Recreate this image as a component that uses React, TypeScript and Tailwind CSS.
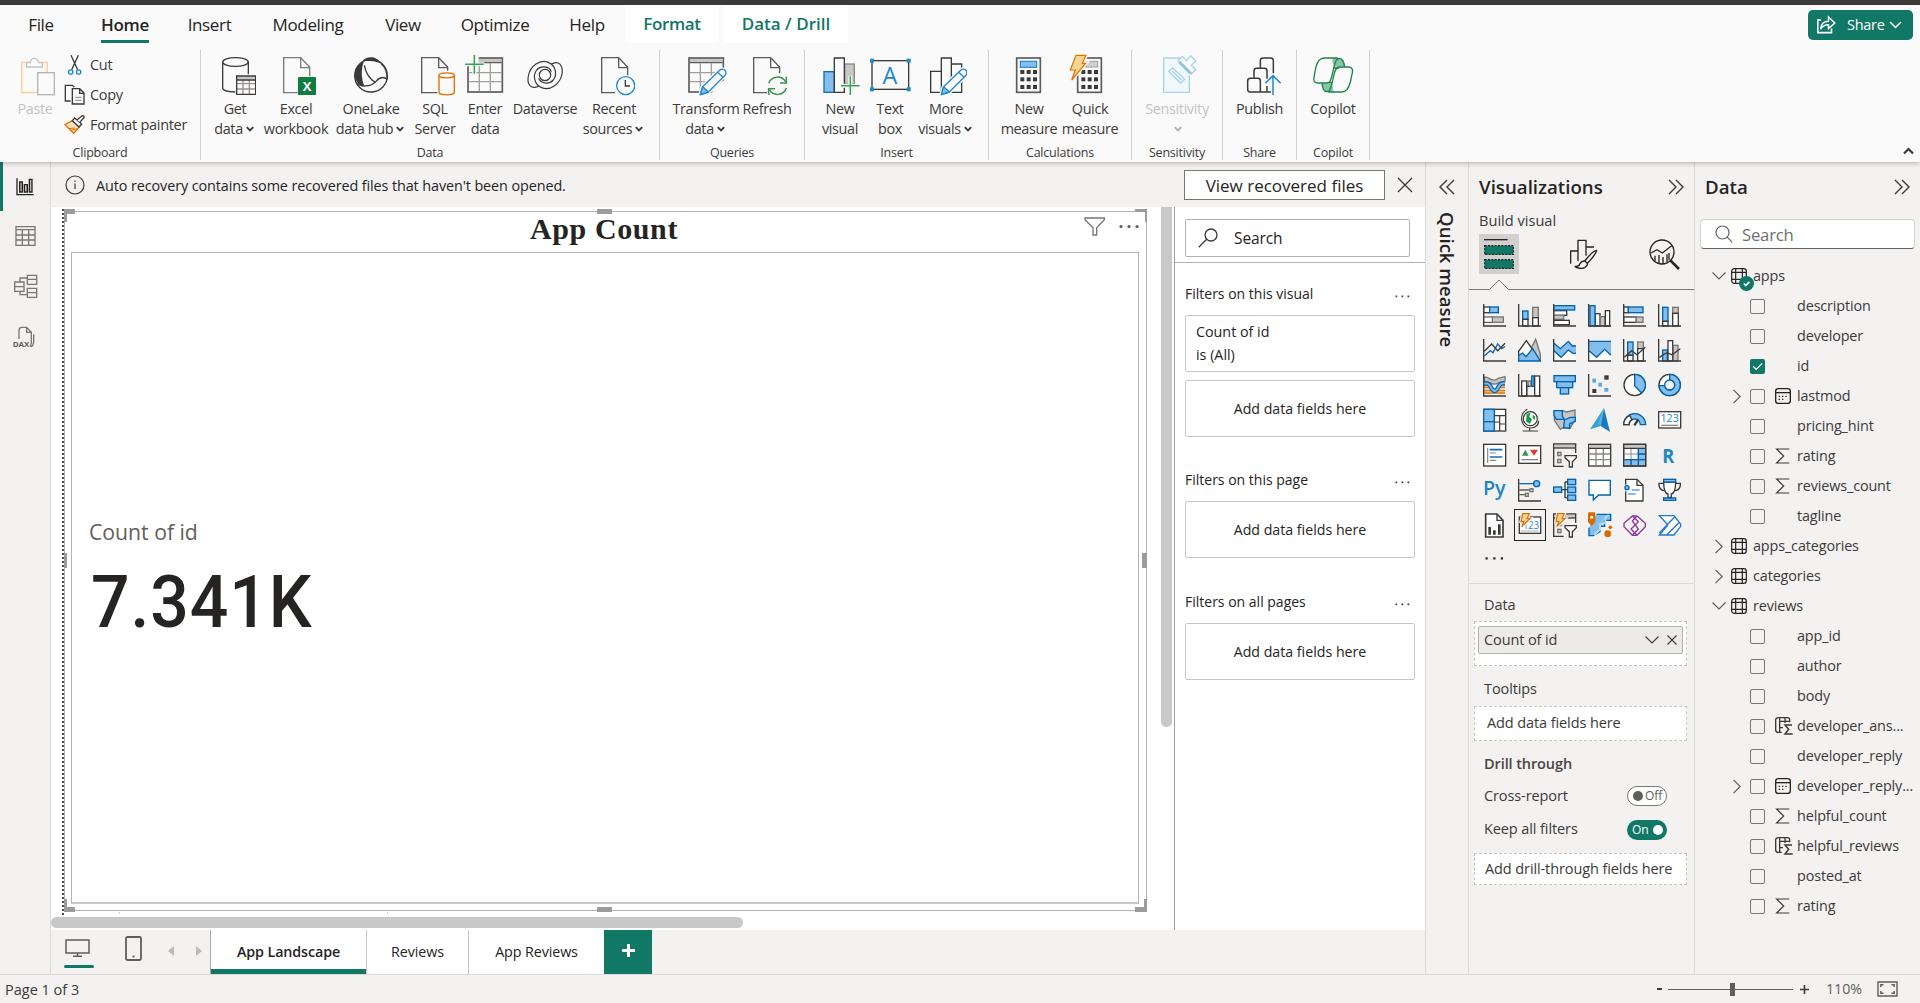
import React from "react";

const DARK = "#3b3a39";
const BLUE = "#1f88d2";
const NAVY = "#0f6cbd";
const SKY = "#83beec";
const GRAY = "#c8c6c4";

/* ---------- shared ribbon shapes (3 units = 1px) ---------- */

const Doc = ({ x, cut = 278, w = 44 }: { x: number; cut?: number; w?: number }) => (
  <g fill="#fafafa" stroke="#5d5b59" strokeWidth="4">
    <path d={`M${x + w} 278 H${x + 1} V173 H${x + 52} L${x + 79} 201 V${cut}`} />
    <path d={`M${x + 52} 173 V203 H${x + 79}`} fill="none" />
  </g>
);

const Plus = ({ x, y }: { x: number; y: number }) => (
  <g>
    <path d={`M${x - 30} ${y} H${x + 30} M${x} ${y - 30} V${y + 30}`} stroke="#fafafa" strokeWidth="12" />
    <path d={`M${x - 28} ${y} H${x + 28} M${x} ${y - 28} V${y + 28}`} stroke="#34a352" strokeWidth="4.5" />
  </g>
);

const Pencil = ({ x }: { x: number }) => (
  <g transform={`translate(${x} 0)`} strokeLinejoin="round">
    <path d="M0 284 L7 260 L58 211 A10 10 0 0 1 74 226 L24 276 Z" fill="#fafafa" stroke="#fafafa" strokeWidth="12" />
    <path d="M0 284 L7 260 L58 211 A10 10 0 0 1 74 226 L24 276 Z" fill="#fafafa" stroke={BLUE} strokeWidth="4" />
    <path d="M0 284 L7 260 L24 276 Z" fill={SKY} stroke={BLUE} strokeWidth="4" />
    <path d="M52 217 L68 232" stroke={BLUE} strokeWidth="4" />
  </g>
);

const RIcon = ({ x, children }: { x: number; children: React.ReactNode }) => (
  <svg className="h-[42px] w-[42px] shrink-0" viewBox={`${x} 162 126 126`} fill="none">
    {children}
  </svg>
);

const Keys = ({ x }: { x: number }) => (
  <g fill={DARK}>
    {[210, 232, 255].map((y) => [0, 19, 38].map((d) => <rect key={`${y}-${d}`} x={x + d} y={y} width="12" height="12" />))}
  </g>
);

const Caret = ({ color = DARK }: { color?: string }) => (
  <svg className="mr-[2px] ml-[3px] inline-block h-[6px] w-[8px]" viewBox="0 0 8 6" fill="none" stroke={color} strokeWidth="1.9">
    <path d="M0.8 1.2 L4 4.4 L7.2 1.2" />
  </svg>
);

const ribbonIcons = {
  paste: (
    <RIcon x={42}>
      <rect x="65" y="187" width="77" height="91" fill="#fdf3e0" stroke="#f3d3a6" strokeWidth="4" />
      <rect x="72" y="196" width="63" height="76" fill="#fafafa" />
      <path d="M80 201 V188 H91 A12 13 0 0 1 115 188 H127 V201 Z" fill="#fafafa" stroke="#c4c4c4" strokeWidth="4" />
      <rect x="113" y="218" width="50" height="66" fill="#fafafa" stroke="#b5b5b5" strokeWidth="4" />
    </RIcon>
  ),
  getData: (
    <RIcon x={642}>
      <path d="M668 186 V264 C668 271 684 276 706 276 M745 186 V223" stroke={DARK} strokeWidth="4" />
      <ellipse cx="706.5" cy="186" rx="38.5" ry="13" stroke={DARK} strokeWidth="4" />
      <rect x="710" y="228" width="57" height="55" fill="#fafafa" />
      <rect x="711" y="229" width="55" height="9" fill={GRAY} />
      <path d="M710 251 H767 M710 267 H767 M729 240 V283 M748 240 V283" stroke="#979593" strokeWidth="4" />
      <path d="M710 228 H767 V283 H710 Z M710 240 H767" stroke={DARK} strokeWidth="4" />
    </RIcon>
  ),
  excel: (
    <RIcon x={825}>
      <g opacity="0.8"><Doc x={850} cut={229} w={43} /></g>
      <rect x="894" y="231" width="54" height="54" rx="2" fill="#107c41" />
      <text x="921" y="273" textAnchor="middle" fontSize="39" fontWeight="700" fill="#fff" fontFamily="Open Sans">X</text>
    </RIcon>
  ),
  oneLake: (
    <RIcon x={1050}>
      <circle cx="1113" cy="227" r="49" stroke={DARK} strokeWidth="4" />
      <path d="M1087 184 C1098 168 1130 166 1142 190 C1124 182 1104 182 1087 184 Z" fill={DARK} />
      <path d="M1064 230 C1062 205 1076 190 1092 184 C1083 205 1083 235 1093 258 C1078 258 1068 246 1064 230 Z" fill={DARK} />
      <path d="M1068 247 C1080 262 1112 262 1128 244 C1140 230 1152 230 1162 238" stroke={DARK} strokeWidth="4" />
      <path d="M1093 196 C1098 222 1110 238 1126 247 M1142 190 C1158 203 1162 220 1162 238" stroke={DARK} strokeWidth="4" />
    </RIcon>
  ),
  sql: (
    <RIcon x={1242}>
      <Doc x={1264} cut={212} w={48} />
      <path d="M1317 226 V277 C1317 287 1363 287 1363 277 V226" fill="#fafafa" stroke="#e07000" strokeWidth="4" />
      <ellipse cx="1340" cy="226" rx="23" ry="7.5" fill="#fafafa" stroke="#e07000" strokeWidth="4" />
    </RIcon>
  ),
  enter: (
    <RIcon x={72}>
      <rect x="84" y="174" width="103" height="102" fill="#fafafa" stroke="#5d5b59" strokeWidth="5" />
      <rect x="87" y="177" width="97" height="9" fill={GRAY} />
      <path d="M86 188 H185" stroke="#5d5b59" strokeWidth="4" />
      <path d="M86 218 H185 M86 245 H185 M118 190 V274 M151 190 V274" stroke="#a19f9d" strokeWidth="4" />
      <path d="M72 162 H116 V198 H82 L72 198 Z" fill="#fafafa" />
      <Plus x={103} y={193} />
    </RIcon>
  ),
  dataverse: (
    <RIcon x={252}>
      <g stroke={DARK} strokeWidth="3.6">
        <circle cx="315" cy="225" r="17" />
        <path d="M297 257 C274 271 260 254 265 228 C271 197 300 177 325 187 C348 196 352 224 340 240 C328 254 303 252 296 235" />
        <path d="M333 193 C356 179 370 196 366 222 C360 253 330 273 305 263 C282 254 278 226 290 210 C302 196 327 198 334 215" />
      </g>
    </RIcon>
  ),
  recent: (
    <RIcon x={459}>
      <Doc x={484} cut={226} w={41} />
      <circle cx="557" cy="257" r="27" fill="#fafafa" stroke={BLUE} strokeWidth="4" />
      <path d="M556 240 V258 H570" stroke={DARK} strokeWidth="4" />
    </RIcon>
  ),
  transform: (
    <RIcon x={735}>
      <rect x="747" y="174" width="103" height="102" fill="#fafafa" stroke="#5d5b59" strokeWidth="5" />
      <rect x="750" y="177" width="97" height="9" fill={GRAY} />
      <path d="M749 188 H848" stroke="#5d5b59" strokeWidth="4" />
      <path d="M749 218 H848 M749 245 H848 M781 190 V274 M814 190 V274" stroke="#a19f9d" strokeWidth="4" />
      <path d="M861 232 L808 284 H861 Z" fill="#fafafa" />
      <Pencil x={781} />
    </RIcon>
  ),
  refresh: (
    <RIcon x={918}>
      <Doc x={940} cut={220} w={41} />
      <path d="M986 250 A28 28 0 0 1 1037 246 M1039 264 A28 28 0 0 1 988 269" stroke="#3a9350" strokeWidth="4.5" />
      <path d="M1039 230 V249 H1020 M986 285 V266 H1005" stroke="#3a9350" strokeWidth="4.5" />
    </RIcon>
  ),
  newVisual: (
    <RIcon x={1137}>
      <rect x="1152" y="215" width="31" height="62" fill={SKY} stroke={NAVY} strokeWidth="4" />
      <rect x="1214" y="192" width="29" height="60" fill={GRAY} stroke="#8a8886" strokeWidth="4" />
      <path d="M1183 174 H1213 V277 H1183 Z" fill="#fafafa" stroke={DARK} strokeWidth="4" />
      <Plus x={1231} y={257} />
    </RIcon>
  ),
  textBox: (
    <RIcon x={1287}>
      <rect x="1296" y="182" width="110" height="86" stroke={DARK} strokeWidth="4" />
      {[1290, 1400].map((x) => [176, 262].map((y) => <rect key={`${x}${y}`} x={x} y={y} width="12" height="12" fill={BLUE} />))}
      <text x="1350" y="251" textAnchor="middle" fontSize="70" fill={BLUE} fontFamily="Open Sans">A</text>
    </RIcon>
  ),
  more: (
    <RIcon x={75}>
      <path d="M92 214 H124 V277 H92 Z M124 174 H154 V277 H124 Z M154 192 H185 V277 H154 Z" stroke={DARK} strokeWidth="4" />
      <Pencil x={124} />
    </RIcon>
  ),
  calc: (
    <RIcon x={324}>
      <rect x="350" y="174" width="71" height="103" stroke="#5d5b59" strokeWidth="5" />
      <rect x="361" y="184" width="49" height="18" fill={SKY} stroke={BLUE} strokeWidth="3.5" />
      <Keys x={361} />
    </RIcon>
  ),
  quick: (
    <RIcon x={507}>
      <rect x="533" y="174" width="71" height="103" stroke="#5d5b59" strokeWidth="5" />
      <rect x="544" y="184" width="49" height="17" fill="#d2d0ce" stroke="#a19f9d" strokeWidth="3" />
      <Keys x={544} />
      <path d="M528 166 H558 L547 190 H557 L515 240 L526 210 H511 Z" fill="#fafafa" stroke="#fafafa" strokeWidth="12" />
      <path d="M528 166 H558 L547 190 H557 L515 240 L526 210 H511 Z" fill="#fbd58f" stroke="#e07000" strokeWidth="3.5" />
    </RIcon>
  ),
  sens: (
    <RIcon x={768}>
      <path d="M840 174 H791 V277 H868 V226" stroke="#a9d3ea" strokeWidth="4" fill="#f1f8fc" />
      <path d="M806 214 L818 204 L854 238 L842 250 Z M816 213 L845 240" stroke="#a9d3ea" strokeWidth="4" />
      <path d="M834 182 L847 169 L860 182 L872 167 L888 183 L874 196 L887 209 L874 222 Z" fill="#fafafa" stroke="#a9d3ea" strokeWidth="4" />
      <path d="M838 186 L872 220" stroke="#8fc4e2" strokeWidth="9" />
    </RIcon>
  ),
  publish: (
    <RIcon x={1014}>
      <g stroke={DARK} strokeWidth="4.5">
        <path d="M1078 204 V182 Q1078 174 1086 174 H1109 Q1117 174 1117 182 V220" />
        <path d="M1059 233 V213 Q1059 205 1067 205 H1090 Q1098 205 1098 213 V236" />
        <path d="M1110 276 H1047 Q1040 276 1040 268 V243 Q1040 235 1048 235 H1070 Q1078 235 1078 243 V276 M1098 258 V276" />
      </g>
      <path d="M1116 285 V228 M1093 250 L1116 227 L1139 250" stroke={BLUE} strokeWidth="4.5" />
    </RIcon>
  ),
  copilot: (
    <RIcon x={1236}>
      <path d="M1300 175 C1325 168 1330 185 1334 200 H1306 C1300 200 1300 190 1296 182 Z" fill="#86c5a3" />
      <path d="M1266 250 H1294 C1300 250 1296 268 1302 275 C1275 282 1270 268 1266 250 Z" fill="#86c5a3" />
      <g stroke="#1d8348" strokeWidth="4">
        <path d="M1313 174 H1272 C1258 174 1252 184 1247 204 L1242 232 C1239 246 1246 249 1256 249 H1280 C1290 249 1292 242 1296 226 L1303 197 C1306 182 1310 176 1318 175 C1328 175 1331 184 1334 200" />
        <path d="M1285 276 H1326 C1340 276 1346 266 1351 246 L1357 218 C1360 204 1352 201 1343 201 H1318 C1309 201 1306 208 1302 224 L1295 253 C1292 268 1288 275 1281 275 C1270 275 1268 264 1266 250" />
        <path d="M1300 204 H1318 M1282 248 H1298" />
      </g>
    </RIcon>
  ),
};

const RButton = ({ icon, l1, l2, caret, w, dim }: { icon: keyof typeof ribbonIcons; l1: string; l2?: string; caret?: boolean; w: string; dim?: boolean }) => (
  <button className={`${w} flex h-[90px] shrink-0 flex-col items-center pt-1`}>
    {ribbonIcons[icon]}
    <span className={`mt-[3px] whitespace-nowrap text-[14.4px] leading-[20px] tracking-[-0.33px] ${dim ? "text-[#c4c4c4]" : "text-[#3b3a39]"}`}>{l1}</span>
    <span className={`flex items-center whitespace-nowrap text-[14.4px] leading-[20px] tracking-[-0.33px] ${dim ? "h-[20px]" : ""} text-[#3b3a39]`}>
      {l2}
      {caret && <Caret color={dim ? "#b0b0b0" : DARK} />}
    </span>
  </button>
);

const Group = ({ label, w, pad, children }: { label: string; w: string; pad: string; children: React.ReactNode }) => (
  <section className={`${w} flex h-[110px] shrink-0 flex-col border-r border-[#d1d1d1]`}>
    <div className={`flex h-[92px] ${pad}`}>{children}</div>
    <div className="pt-[3px] text-center text-[12.5px] leading-[20px] tracking-[-0.2px] text-[#3b3a39]">{label}</div>
  </section>
);

const tabs = [
  ["File", "ml-[28px] w-[26px]"],
  ["Home", "ml-[47px] w-[48px]"],
  ["Insert", "ml-[39px] w-[43px]"],
  ["Modeling", "ml-[40px] w-[74px]"],
  ["View", "ml-[39px] w-[38px]"],
  ["Optimize", "ml-[38px] w-[70px]"],
  ["Help", "ml-[39px] w-[36px]"],
];

const Ribbon = () => (
  <header className="relative z-10 h-[162px] w-full bg-[#fafafa] shadow-[0_1px_5px_rgba(0,0,0,0.28)]">
    <div className="h-[5px] bg-[#3b3a39]" />
    <div className="flex h-[45px] items-start text-[17px] text-[#252423]">
      {tabs.map(([t, c]) => (
        <div key={t} className={`${c} flex h-[38px] flex-col items-center justify-between whitespace-nowrap tracking-[-0.35px] ${t === "Home" ? "font-semibold" : ""}`}>
          <span className="pt-[1px] leading-[37px]">{t}</span>
          {t === "Home" && <span className="-mt-[3px] h-[3px] w-full shrink-0 bg-[#117865]" />}
        </div>
      ))}
      <div className="ml-[20px] flex h-[38px] w-[94px] items-center justify-center bg-white font-semibold tracking-[-0.35px] text-[#117865]">Format</div>
      <div className="ml-[5px] flex h-[38px] w-[124px] items-center justify-center whitespace-nowrap bg-white font-semibold text-[#117865]">Data / Drill</div>
      <button className="mt-[5px] ml-auto mr-[7px] flex h-[30px] w-[105px] items-center rounded-[5px] bg-[#117865] text-white">
        <svg className="ml-[8px] h-5 w-5" viewBox="0 0 20 20" fill="none" stroke="white" strokeWidth="1.6">
          <path d="M5 5 H1.8 V17.6 H15.5 V13.5" />
          <path d="M4.5 14 C5 9 8 6.3 12.5 6.2 V2 L18.8 8 L12.5 13.6 V9.8 C9 9.8 6.5 11 4.5 14 Z" strokeWidth="1.4" />
        </svg>
        <span className="ml-[11px] text-[14.5px] font-medium tracking-[-0.3px]">Share</span>
        <svg className="ml-[5px] h-[8px] w-[13px]" viewBox="0 0 13 8" fill="none" stroke="white" strokeWidth="1.5"><path d="M1 1 L6.5 6.5 L12 1" /></svg>
      </button>
    </div>
    <div className="flex items-start">
      <Group label="Clipboard" w="w-[201px]" pad="pl-0">
        <div className="flex w-[63px] pl-[0px]">
          <div className="ml-[4px]"><RButton icon="paste" l1="Paste" w="w-[62px]" dim /></div>
        </div>
        <div className="flex flex-col text-[14.5px] tracking-[-0.3px] text-[#3b3a39]">
          <div className="flex h-[30px] items-center">
            <svg className="mr-[3px] h-6 w-6" viewBox="190 160 72 72" fill="none">
              <path d="M214 167 L234 210 M236 167 L216 210" stroke={DARK} strokeWidth="4" />
              <circle cx="213" cy="217" r="6.5" stroke={BLUE} strokeWidth="4" /><circle cx="237" cy="217" r="6.5" stroke={BLUE} strokeWidth="4" />
            </svg>
            Cut
          </div>
          <div className="flex h-[30px] items-center">
            <svg className="mr-[3px] h-6 w-6" viewBox="190 250 72 72" fill="none" stroke={DARK} strokeWidth="4">
              <path d="M213 304 H197 V257 H218 L224 263" />
              <path d="M218 267 H240 L253 280 V313 H218 Z M240 267 V281 H253" /><path d="M227 293 H246 M227 302 H246" stroke="#8a8886" strokeWidth="3" />
            </svg>
            Copy
          </div>
          <div className="flex h-[30px] items-center whitespace-nowrap">
            <svg className="mr-[3px] h-6 w-6" viewBox="190 339 72 72" fill="none">
              <path d="M196 374 L218 362 L240 380 L222 400 Z" fill="#fbe3bd" stroke="#e07000" strokeWidth="4" />
              <path d="M206 386 L226 384 M212 392 L234 386" stroke="#e07000" strokeWidth="3" />
              <path d="M218 362 L225 354 L246 372 L238 381 Z" fill="#fafafa" stroke={DARK} strokeWidth="4" />
              <path d="M232 360 L246 348 Q254 345 253 353 L240 367" fill="#fafafa" stroke={DARK} strokeWidth="4" />
            </svg>
            Format painter
          </div>
        </div>
      </Group>
      <Group label="Data" w="w-[459px]" pad="pl-[8px]">
        <RButton icon="getData" l1="Get" l2="data" caret w="w-[52px]" />
        <RButton icon="excel" l1="Excel" l2="workbook" w="w-[70px]" />
        <RButton icon="oneLake" l1="OneLake" l2="data hub" caret w="w-[80px]" />
        <RButton icon="sql" l1="SQL" l2="Server" w="w-[48px]" />
        <RButton icon="enter" l1="Enter" l2="data" w="w-[52px]" />
        <RButton icon="dataverse" l1="Dataverse" w="w-[68px]" />
        <RButton icon="recent" l1="Recent" l2="sources" caret w="w-[70px]" />
      </Group>
      <Group label="Queries" w="w-[145px]" pad="pl-[11px]">
        <RButton icon="transform" l1="Transform" l2="data" caret w="w-[70px]" />
        <RButton icon="refresh" l1="Refresh" w="w-[52px]" />
      </Group>
      <Group label="Insert" w="w-[184px]" pad="pl-[13px]">
        <RButton icon="newVisual" l1="New" l2="visual" w="w-[44px]" />
        <RButton icon="textBox" l1="Text" l2="box" w="w-[56px]" />
        <RButton icon="more" l1="More" l2="visuals" caret w="w-[56px]" />
      </Group>
      <Group label="Calculations" w="w-[143px]" pad="pl-[9px]">
        <RButton icon="calc" l1="New" l2="measure" w="w-[62px]" />
        <RButton icon="quick" l1="Quick" l2="measure" w="w-[60px]" />
      </Group>
      <Group label="Sensitivity" w="w-[91px]" pad="">
        <RButton icon="sens" l1="Sensitivity" caret dim w="w-[90px]" />
      </Group>
      <Group label="Share" w="w-[74px]" pad=""><RButton icon="publish" l1="Publish" w="w-[73px]" /></Group>
      <Group label="Copilot" w="w-[73px]" pad=""><RButton icon="copilot" l1="Copilot" w="w-[72px]" /></Group>
      <svg className="mt-[97px] mr-[6px] ml-auto h-[8px] w-[11px]" viewBox="0 0 11 8" fill="none" stroke={DARK} strokeWidth="2.2"><path d="M1 6.5 L5.5 2 L10 6.5" /></svg>
    </div>
  </header>
);

/* ---------- left rail ---------- */

const Rail = () => (
  <nav className="flex w-[51px] shrink-0 flex-col border-r border-[#dcdad8]">
    <div className="flex h-[49px] items-center border-l-[3px] border-[#117865] pl-[13px]">
      <svg className="h-[18px] w-[18px]" viewBox="0 0 54 54" fill="none" stroke="#252423" strokeWidth="4"><path d="M3 1 V50 H53" /><path d="M11 12 H19 V42 H11 Z M25 20 H34 V42 H25 Z M40 4 H48 V42 H40 Z" fill="#bdbbb9" /></svg>
    </div>
    <div className="flex h-[50px] items-center pl-[15px]">
      <svg className="h-5 w-[21px]" viewBox="0 0 63 60" fill="none" stroke="#797775" strokeWidth="4"><path d="M3 2 H60 V58 H3 Z M3 11 H60 M3 27 H60 M3 42 H60 M22 11 V58 M41 11 V58" /></svg>
    </div>
    <div className="flex h-[50px] items-center pl-[14px]">
      <svg className="h-6 w-6" viewBox="0 0 72 72" fill="none" stroke="#797775" strokeWidth="4"><path d="M2 24 H30 V52 H2 Z M2 38 H30 M40 4 H68 V31 H40 Z M40 16 H68 M40 43 H68 V70 H40 Z M40 56 H68 M18 24 V12 H40 M18 52 V62 H40" /></svg>
    </div>
    <div className="flex h-[52px] items-center pl-[12px]">
      <svg className="h-6 w-6" viewBox="0 0 72 72" fill="none" stroke="#797775" strokeWidth="4"><path d="M21 42 V16 Q21 7 30 7 H44 L58 22 V54 Q57 62 54 64 M44 7 V22 H58 M65 28 V52 Q64 62 56 66" /><text x="2" y="66" fontSize="23" fontWeight="700" stroke="none" fill="#605e5c" fontFamily="Open Sans" textLength="50" lengthAdjust="spacingAndGlyphs">DAX</text></svg>
    </div>
  </nav>
);

/* ---------- canvas ---------- */

const Handle = ({ c }: { c: string }) => <span className={`absolute bg-[#9c9c9c] ${c}`} />;

const ReportCanvas = () => (
  <div className="relative flex h-[723px] w-[1123px] bg-white">
    <div className="ml-[11px] mt-[2px] h-[706px] border-l-2 border-dotted border-[#4a4a4a]" />
    <div className="relative mt-[4px] flex h-[700px] w-[1083px] flex-col border border-[#b3b3b3]">
      <Handle c="-left-px -top-[3px] h-[5px] w-[11px]" /><Handle c="-left-px -top-[3px] h-[13px] w-[3px]" />
      <Handle c="-right-px -top-[3px] h-[3px] w-[12px]" /><Handle c="-right-px -top-[3px] h-[13px] w-[2px]" />
      <Handle c="-left-px -bottom-[2px] h-[5px] w-[11px]" /><Handle c="-left-px -bottom-[2px] h-[13px] w-[3px]" />
      <Handle c="-right-px -bottom-[2px] h-[5px] w-[12px]" /><Handle c="-right-px -bottom-[2px] h-[13px] w-[3px]" />
      <Handle c="left-[532px] -top-[3px] h-[5px] w-[15px]" /><Handle c="left-[532px] -bottom-[2px] h-[5px] w-[15px]" />
      <Handle c="-left-px top-[341px] h-[15px] w-[3px]" /><Handle c="-right-px top-[341px] h-[15px] w-[5px]" />
      <div className="flex h-[40px] items-start">
        <h1 className="flex-1 pl-[59px] text-center font-['Liberation_Serif'] text-[30px] leading-[34px] font-bold tracking-[0.6px] text-[#252423]">App Count</h1>
        <svg className="mt-[5px] h-[20px] w-[22px]" viewBox="0 0 66 60" fill="none" stroke="#797775" strokeWidth="4"><path d="M3 3 H61 V8 L38 32 V54 H27 V32 L3 8 Z" /></svg>
        <svg className="mr-[7px] ml-[13px] mt-[12px] h-[5px] w-[20px]" viewBox="0 0 20 5" fill="#605e5c"><circle cx="2" cy="2.5" r="1.6" /><circle cx="10" cy="2.5" r="1.6" /><circle cx="18" cy="2.5" r="1.6" /></svg>
      </div>
      <div className="ml-[6px] h-[652px] w-[1068px] border border-b-2 border-[#b3b3b3] border-b-[#c8c8c8] pt-[264px] pl-[17px]">
        <div className="text-[21.2px] leading-[30px] text-[#605e5c]">Count of id</div>
        <div className="mt-[15px] ml-[2px] origin-left scale-x-[0.93] font-['Roboto'] text-[73px] leading-[80px] font-medium tracking-[1px] text-[#252423]">7.341K</div>
      </div>
      <span className="absolute left-[54px] -bottom-[4px] h-[2px] w-px bg-[#d1d1d1]" /><span className="absolute left-[322px] -bottom-[4px] h-[2px] w-px bg-[#d1d1d1]" />
    </div>
    <div className="ml-[14px] h-[520px] w-[11px] rounded-b-[5px] bg-[#c8c8c8]" />
    <div className="absolute left-0 top-[710px] h-[11px] w-[692px] rounded-full bg-[#c8c8c8]" />
  </div>
);

const Dots = () => (
  <svg className="h-[3px] w-[15px]" viewBox="0 0 15 3" fill="#3b3a39"><rect x="0.5" y="0.5" width="1.7" height="1.7" /><rect x="6.5" y="0.5" width="1.7" height="1.7" /><rect x="12.5" y="0.5" width="1.7" height="1.7" /></svg>
);

const DropCard = () => (
  <div className="flex h-[57px] w-[230px] items-center justify-center rounded-[2px] border border-[#c8c6c4] text-[14.2px]">Add data fields here</div>
);

const FilterTitle = ({ t }: { t: string }) => (
  <div className="flex h-[22px] w-[225px] items-center justify-between text-[14px]">
    {t}
    <span className="pt-[6px]"><Dots /></span>
  </div>
);

const Filters = () => (
  <aside className="flex h-[723px] w-[251px] flex-col border-l border-[#a19f9d] bg-white text-[#252423]">
    <div className="flex h-[56px] items-start border-b border-[#b3b0ad] pt-[12px] pl-[10px]">
      <div className="flex h-[38px] w-[225px] items-center rounded-[2px] border border-[#b3b0ad] pl-[12px]">
        <svg className="h-5 w-5" viewBox="0 0 20 20" fill="none" stroke="#3b3a39" strokeWidth="1.3"><circle cx="13" cy="7" r="6" /><path d="M8.7 11.3 L0.8 19.2" /></svg>
        <span className="ml-[16px] pt-[2px] text-[15.5px] tracking-[-0.1px]">Search</span>
      </div>
    </div>
    <div className="flex flex-col pl-[10px]">
      <div className="mt-[19px]"><FilterTitle t="Filters on this visual" /></div>
      <div className="mt-[11px] flex h-[57px] w-[230px] flex-col justify-center rounded-[2px] border border-[#c8c6c4] pb-[2px] pl-[10px] text-[14.3px] leading-[23px]">
        <span>Count of id</span>
        <span>is (All)</span>
      </div>
      <div className="mt-[8px]"><DropCard /></div>
      <div className="mt-[31px] mb-[11px]"><FilterTitle t="Filters on this page" /></div>
      <DropCard />
      <div className="mt-[32px] mb-[11px]"><FilterTitle t="Filters on all pages" /></div>
      <DropCard />
    </div>
  </aside>
);

const Banner = () => (
  <div className="flex h-[45px] items-center text-[#252423]">
    <svg className="ml-[14px] h-5 w-5" viewBox="0 0 20 20" fill="none" stroke="#3b3a39" strokeWidth="1.2"><circle cx="10" cy="10" r="9" /><path d="M10 8.5 V14 M10 5.5 V7" /></svg>
    <span className="ml-[11px] pt-[2px] text-[14.4px] tracking-[-0.1px]">Auto recovery contains some recovered files that haven't been opened.</span>
    <button className="mt-[1px] ml-auto flex h-[30px] w-[201px] items-center justify-center border border-[#797775] bg-white pt-[2px] text-[17px] font-medium">View recovered files</button>
    <svg className="mr-[12px] ml-[12px] h-4 w-4" viewBox="0 0 16 16" fill="none" stroke="#3b3a39" strokeWidth="1.3"><path d="M1 1 L15 15 M15 1 L1 15" /></svg>
  </div>
);

const PageTabs = () => (
  <div className="flex h-[44px] text-[14.3px] tracking-[-0.1px] text-[#252423]">
    <div className="flex w-[160px] items-start border-r border-[#a6a6a6]">
      <div className="ml-[13px] flex w-[30px] flex-col items-center pt-[9px]">
        <svg className="-ml-[3px] h-[18px] w-[25px]" viewBox="0 0 25 18" fill="none" stroke="#605e5c" strokeWidth="1.5"><path d="M1 1 H24 V14 H1 Z M12.5 14 V17 M8 17.2 H17" /></svg>
        <span className="mt-[8px] h-[3px] w-[30px] rounded-full bg-[#117865]" />
      </div>
      <svg className="mt-[6px] ml-[31px] h-[25px] w-[17px]" viewBox="0 0 17 25" fill="none" stroke="#605e5c" strokeWidth="1.8"><rect x="1" y="1" width="15" height="23" rx="1.5" /><path d="M7.5 20.5 H9.5" /></svg>
      <svg className="mt-[16px] ml-[26px] h-[10px] w-[6px]" viewBox="0 0 6 10" fill="#bdbbb9"><path d="M6 0 V10 L0 5 Z" /></svg>
      <svg className="mt-[16px] ml-[22px] h-[10px] w-[6px]" viewBox="0 0 6 10" fill="#bdbbb9"><path d="M0 0 V10 L6 5 Z" /></svg>
    </div>
    <div className="flex w-[155px] items-center justify-center border-b-[5px] border-[#117865] bg-white pt-[5px] font-semibold">App Landscape</div>
    <div className="flex w-[103px] items-center justify-center border-x border-[#c8c6c4] bg-white">Reviews</div>
    <div className="flex w-[135px] items-center justify-center bg-white">App Reviews</div>
    <div className="flex w-[48px] items-center justify-center bg-[#117865]">
      <svg className="-mt-[3px] h-[15px] w-[15px]" viewBox="0 0 15 15" stroke="#fff" strokeWidth="3"><path d="M7.5 1 V14 M1 7.5 H14" /></svg>
    </div>
  </div>
);

/* ---------- visualizations ---------- */

const K = { stroke: DARK, strokeWidth: 4, fill: "none" } as const;
const B = { stroke: "#0063b1", strokeWidth: 4, fill: SKY } as const;
const G = { stroke: "#797775", strokeWidth: 4, fill: GRAY } as const;
const W = { stroke: DARK, strokeWidth: 4, fill: "#fff" } as const;
const Axis = () => <path d="M2 3 V69 H69" {...K} />;
const Bolt = () => (
  <g>
    <path d="M14 0 H36 L28 17 H38 L9 44 L17 26 H8 Z" fill="#f3f2f1" stroke="#f3f2f1" strokeWidth="8" />
    <path d="M14 2 H34 L27 17 H36 L11 41 L18 26 H9 Z" fill="#fbd58f" stroke="#e07000" strokeWidth="3.5" />
  </g>
);
const Funnel = () => <path d="M36 38 H70 V44 L58 56 V72 H49 V56 L36 44 Z" fill="#fff" stroke={DARK} strokeWidth="4" />;
const Slicer = () => (
  <g>
    <path d="M32 70 H2 V3 H68 V30" {...K} />
    <rect x="4" y="5" width="62" height="8" fill={GRAY} />
    <path d="M2 15 H68" {...K} />
    <rect x="14" y="28" width="10" height="10" {...G} /><rect x="14" y="49" width="10" height="10" {...G} />
    <Funnel />
  </g>
);

const vizIcons: React.ReactNode[] = [
  <g><rect x="2" y="12" width="18" height="17" {...W} /><rect x="20" y="12" width="26" height="17" {...B} /><rect x="2" y="42" width="28" height="16" {...W} strokeWidth="3" /><rect x="28" y="42" width="33" height="16" {...G} /><Axis /></g>,
  <g><rect x="14" y="24" width="16" height="25" {...B} /><rect x="14" y="49" width="16" height="20" {...W} /><rect x="44" y="13" width="17" height="31" {...G} /><rect x="44" y="44" width="17" height="25" {...W} /><Axis /></g>,
  <g><rect x="2" y="23" width="39" height="14" {...W} /><rect x="2" y="37" width="30" height="12" {...G} /><rect x="2" y="52" width="47" height="13" {...W} /><rect x="2" y="8" width="63" height="13" {...B} /><Axis /></g>,
  <g><rect x="22" y="32" width="14" height="37" {...W} /><rect x="37" y="41" width="14" height="28" {...G} /><rect x="52" y="23" width="13" height="46" {...W} /><rect x="6" y="8" width="15" height="61" {...B} /><Axis /></g>,
  <g><rect x="2" y="12" width="14" height="17" {...W} /><rect x="16" y="12" width="44" height="17" {...B} /><rect x="2" y="42" width="38" height="16" {...W} /><rect x="40" y="42" width="20" height="16" {...G} /><Axis /></g>,
  <g><rect x="14" y="13" width="16" height="42" {...B} /><rect x="14" y="55" width="16" height="14" {...W} /><rect x="44" y="13" width="17" height="18" {...G} /><rect x="44" y="31" width="17" height="38" {...W} /><Axis /></g>,
  <g><path d="M4 54 L22 38 L30 44 L44 18 L56 32 L66 26" stroke={NAVY} strokeWidth="4" fill="none" /><path d="M4 40 L26 18 L44 38 L66 16" {...K} /><Axis /></g>,
  <g><path d="M40 30 L53 4 L67 48 V69" {...G} /><path d="M2 60 V40 L25 8 L45 36" {...W} /><path d="M2 52 V69 H67 L44 32 L24 56 L14 45 Z" {...B} /></g>,
  <g><path d="M4 68 V40 L24 58 L44 38 L68 56 V68 Z" fill="#fff" /><path d="M3 16 L22 32 L46 10 L56 22 H69 V46 H60 L46 36 L24 58 L3 40 Z" fill={SKY} /><path d="M3 16 L22 32 L46 10 L58 24 H69 M3 38 L24 58 L46 36 L60 46 H69" stroke="#0063b1" strokeWidth="4" fill="none" /><Axis /></g>,
  <g><path d="M4 68 V40 L24 58 L44 38 L68 56 V68 Z" fill="#fff" /><path d="M3 10 H69 V52 L50 34 L26 58 L3 38 Z" fill={SKY} /><path d="M3 10 H69 M3 38 L26 58 L50 34 L69 52" stroke="#0063b1" strokeWidth="4" fill="none" /><Axis /></g>,
  <g><rect x="14" y="12" width="16" height="40" {...B} /><rect x="14" y="52" width="16" height="17" {...W} /><rect x="44" y="12" width="17" height="20" {...G} /><rect x="44" y="32" width="17" height="37" {...W} /><path d="M4 58 L26 38 L42 50 L67 28" {...K} /><Axis /></g>,
  <g><rect x="14" y="36" width="14" height="33" {...B} /><rect x="30" y="8" width="14" height="61" {...W} /><rect x="46" y="22" width="14" height="47" {...G} /><path d="M4 58 L26 44 L42 50 L67 32" {...K} /><Axis /></g>,
  <g><path d="M4 40 H18 M52 40 H66 M4 56 H66" stroke="#d96a00" strokeWidth="12" /><path d="M4 40 H16 M54 40 H66 M4 56 H66" stroke="#fbb45c" strokeWidth="5" /><path d="M4 12 L14 14 Q34 28 46 16 L66 11 V24 L50 28 Q34 38 20 29 L4 24 Z" {...G} /><path d="M3 32 H14 C24 34 24 54 35 54 C46 54 46 32 58 31 H66" stroke="#0063b1" strokeWidth="13" fill="none" /><path d="M3 32 H14 C24 34 24 54 35 54 C46 54 46 32 58 31 H66" stroke={SKY} strokeWidth="5.5" fill="none" /><Axis /></g>,
  <g><rect x="11" y="24" width="15" height="45" {...W} /><rect x="30" y="24" width="9" height="16" {...G} /><rect x="41" y="9" width="7" height="31" {...B} /><rect x="50" y="9" width="15" height="60" {...W} /><path d="M26 68 V40 H34" {...K} /><Axis /></g>,
  <g><rect x="3" y="8" width="64" height="18" {...B} /><rect x="11" y="26" width="48" height="18" {...B} /><rect x="22" y="44" width="25" height="19" {...B} /></g>,
  <g><rect x="49" y="7" width="13" height="13" fill={DARK} /><rect x="13" y="17" width="11" height="12" fill="#5ba7e0" /><rect x="31" y="29" width="11" height="12" fill="#5ba7e0" /><rect x="49" y="45" width="12" height="11" fill="#5ba7e0" /><rect x="13" y="48" width="12" height="12" fill={DARK} /><Axis /></g>,
  <g><circle cx="35" cy="36" r="32" {...W} /><path d="M35 4 A32 32 0 0 1 56 60 L35 38 Z" {...B} /></g>,
  <g><circle cx="35" cy="36" r="32" {...W} /><path d="M35 4 A32 32 0 1 1 3 38 H20 A15 15 0 1 0 35 21 Z" {...B} /><circle cx="35" cy="36" r="15" fill="#f3f2f1" stroke="#0063b1" strokeWidth="4" /></g>,
  <g><rect x="2" y="4" width="66" height="65" {...W} /><rect x="2" y="4" width="32" height="37" {...B} /><rect x="2" y="41" width="32" height="28" {...B} /><path d="M34 23 H68 M50 23 V69 M34 42 H50 M50 48 H68" {...K} strokeWidth="3.5" /></g>,
  <g><circle cx="37" cy="32" r="21" {...W} strokeWidth="3.5" /><path d="M26 18 L38 14 L34 26 L42 34 L36 48 L24 40 Z M44 20 L52 26 L50 36 L44 30 Z" fill="#1f9a48" /><path d="M28 4 C0 18 8 62 40 60 C56 58 62 48 62 38 M35 60 V69 M14 69 H60" {...K} strokeWidth="3.5" /></g>,
  <g><path d="M4 8 H30 L40 12 L66 6 V36 L50 62 L34 56 L22 64 L4 36 Z" {...G} /><path d="M3 8 H28 V24 L34 34 H10 L3 22 Z M34 36 L52 28 H67 V40 L50 48 V60 H32 Z" {...B} /></g>,
  <g><path d="M48 0 L6 64 L38 54 Z" fill="#3aa0d8" /><path d="M48 0 L66 72 L38 54 Z" fill="#1b78c2" /><path d="M48 0 L38 54 L30 46 Z" fill="#65bde6" opacity="0.6" /></g>,
  <g><path d="M2 50 A33 33 0 0 1 68 50 H52 A17 17 0 0 0 18 50 Z" {...B} /><path d="M2 50 A33 33 0 0 1 20 22 L27 35 A17 17 0 0 0 18 50 Z" {...W} /><path d="M34 52 L46 34" {...K} strokeWidth="7" /></g>,
  <g><rect x="2" y="11" width="66" height="49" {...W} /><text x="35" y="43" textAnchor="middle" fontSize="32" fill={BLUE} fontFamily="Open Sans">123</text><path d="M10 52 H60" stroke="#8a8886" strokeWidth="4" /></g>,
  <g><rect x="2" y="4" width="66" height="65" {...W} /><path d="M14 14 V60 M20 30 H38 M20 52 H40" stroke="#8a8886" strokeWidth="3.5" /><path d="M20 20 H58 M20 42 H58" stroke={NAVY} strokeWidth="5" /></g>,
  <g><rect x="2" y="8" width="66" height="53" {...W} /><path d="M12 38 L22 20 L32 38 Z" fill="#3a9350" /><path d="M36 20 H60 L48 38 Z" fill="#e03a2f" /><path d="M10 50 H60" stroke="#8a8886" strokeWidth="4" /></g>,
  <Slicer />,
  <g><rect x="2" y="4" width="66" height="65" {...W} /><rect x="4" y="6" width="62" height="8" fill={GRAY} /><path d="M2 16 H68" {...K} /><path d="M4 33 H66 M4 50 H66 M24 18 V67 M46 18 V67" stroke="#8a8886" strokeWidth="4" /></g>,
  <g><rect x="2" y="4" width="66" height="65" {...W} /><rect x="4" y="6" width="62" height="8" fill={GRAY} /><path d="M46 16 H66 V67 H4 V50 H46 Z" fill={SKY} /><path d="M2 16 H68" {...K} /><path d="M4 33 H66 M4 50 H66 M24 18 V67 M46 18 V67" stroke="#8a8886" strokeWidth="3" /><path d="M46 16 V67 M4 50 H66 M46 33 H66 M24 50 V67" stroke="#0063b1" strokeWidth="4" /><path d="M2 4 H68 V69 H2 Z" {...K} /></g>,
  <text x="31" y="59" textAnchor="middle" fontSize="60" fontWeight="700" fill="#2185c5" fontFamily="Open Sans" textLength="36" lengthAdjust="spacingAndGlyphs">R</text>,
  <text x="34" y="51" textAnchor="middle" fontSize="60" fontWeight="600" fill="#2185c5" fontFamily="Open Sans" textLength="68" lengthAdjust="spacingAndGlyphs">Py</text>,
  <g><path d="M4 17 H50" stroke={NAVY} strokeWidth="4" /><circle cx="56" cy="17" r="9" {...B} /><path d="M4 36 H36 M4 50 H24" stroke="#605e5c" strokeWidth="4" /><rect x="36" y="32" width="9" height="9" {...G} /><rect x="22" y="46" width="9" height="9" {...G} /><Axis /></g>,
  <g><path d="M26 35 H44 M36 12 V60 M36 12 H44 M36 59 H44" {...K} /><rect x="2" y="27" width="24" height="16" {...B} /><rect x="44" y="4" width="24" height="16" {...B} /><rect x="44" y="27" width="24" height="17" {...B} /><rect x="44" y="51" width="24" height="16" {...B} /></g>,
  <path d="M3 7 H67 V51 H32 L16 66 V51 H3 Z" fill="#fff" stroke="#0063b1" strokeWidth="4" />,
  <g><path d="M8 40 V69 H60 V22 L42 4 H8 V20" {...W} /><path d="M42 4 V22 H60" {...K} /><circle cx="12" cy="29" r="6" {...B} /><path d="M26 36 H50 M14 48 H38" stroke="#5ba7e0" strokeWidth="4" /></g>,
  <g><path d="M18 16 H3 V22 Q5 38 22 38 M52 16 H67 V22 Q65 38 48 38" {...K} /><path d="M17 12 H53 Q53 46 40 48 V58 H30 V48 Q17 46 17 12 Z" {...W} /><rect x="17" y="4" width="36" height="8" {...B} /><path d="M17 67 V60 H53 V67 Z" {...B} /></g>,
  <g><path d="M8 3 H42 L60 22 V72 H8 Z" {...W} strokeWidth="5" /><path d="M42 3 V22 H60" {...K} /><path d="M16 42 H24 V65 H16 Z M30 52 H38 V65 H30 Z M45 34 H53 V65 H45 Z" fill={DARK} /></g>,
  <g><rect x="4" y="12" width="64" height="49" {...W} /><text x="39" y="48" textAnchor="middle" fontSize="34" fill={BLUE} fontFamily="Open Sans" textLength="48" lengthAdjust="spacingAndGlyphs">123</text><path d="M8 54 H62" stroke="#b3b0ad" strokeWidth="3" /><Bolt /></g>,
  <g><Slicer /><Bolt /></g>,
  <g><path d="M26 4 H68 V22 H50 V40 H36 V56 L16 68 H3 V44" {...B} /><path d="M62 6 L52 14 L52 30 L36 34 V50 L18 66" stroke="#b7daf5" strokeWidth="6" fill="none" /><path d="M0 2 Q0 -2 4 -2 H18 Q22 -2 22 2 V26 L11 40 L0 26 Z" fill="#d96a00" /><circle cx="11" cy="13" r="4.5" fill="#fff" /><circle cx="67" cy="43" r="5.5" fill="#d96a00" /><circle cx="59" cy="62" r="10" fill="#d96a00" /></g>,
  <g fill="none" stroke="#8b3a9e" strokeWidth="4"><path d="M28 9 H42 L67 31 V41 L42 67 H28 L3 41 V31 Z" /><path d="M28 9 L46 26 L24 48 L42 67 M42 9 L28 24 L46 48 L28 67" /></g>,
  <g fill="#fff" stroke="#1f78d1" strokeWidth="4"><path d="M4 8 H48 L68 34 V40 L48 66 H4 L28 38 V34 Z" /><path d="M4 60 L50 12 M26 66 L62 30" fill="none" /></g>,
];

const Chev2 = ({ left }: { left?: boolean }) => (
  <svg className="h-[16px] w-[16px]" viewBox="0 0 16 16" fill="none" stroke="#3b3a39" strokeWidth="1.4">
    {left ? <path d="M8 1 L1 8 L8 15 M15 1 L8 8 L15 15" /> : <path d="M1 1 L8 8 L1 15 M8 1 L15 8 L8 15" />}
  </svg>
);

const Visualizations = () => (
  <aside className="flex w-[226px] shrink-0 flex-col border-r border-[#dcdad8] text-[#3b3a39]">
    <div className="mt-[12px] flex h-[26px] items-center justify-between pr-[10px] pl-[10px]">
      <h2 className="text-[18.7px] font-semibold text-[#252423]">Visualizations</h2>
      <Chev2 />
    </div>
    <div className="mt-[9px] h-[22px] pl-[10px] text-[14.6px] leading-[22px]">Build visual</div>
    <div className="mt-[3px] flex h-[40px] items-center pl-[10px]">
      <div className="flex h-[40px] w-[40px] items-center justify-center bg-[#d2d0ce]">
        <svg className="h-[30px] w-[30px]" viewBox="0 0 90 90" fill="none"><path d="M0 2 H71" stroke="#252423" strokeWidth="4" /><rect x="2" y="20" width="86" height="27" fill="#117865" /><rect x="2" y="62" width="86" height="27" fill="#117865" /><g stroke="#252423" strokeWidth="4" strokeDasharray="6 4"><rect x="2" y="20" width="86" height="26" /><rect x="2" y="62" width="86" height="26" /></g></svg>
      </div>
      <svg className="ml-[51px] h-[30px] w-[28px]" viewBox="0 0 84 90" fill="none" stroke="#252423" strokeWidth="4"><path d="M2 74 V36 H24 M24 66 V4 H48 V50 M48 24 H72" /><path d="M80 34 Q70 34 44 66 L52 73 Q78 46 80 34 Z" /><path d="M44 66 Q34 66 30 74 Q26 84 14 82 Q30 92 44 86 Q54 80 52 73" /></svg>
      <svg className="ml-[51px] h-[31px] w-[31px]" viewBox="0 0 93 93" fill="none" stroke="#252423" strokeWidth="4"><circle cx="39" cy="39" r="36" /><path d="M6 42 L24 32 L40 42 L68 20 M18 50 V66 M30 48 V72 M42 54 V74 M54 46 V70 M60 42 V64" /><path d="M64 64 L90 90" strokeWidth="8" /></svg>
    </div>
    <svg className="mt-[5px] h-[11px] w-[225px]" viewBox="0 0 225 11" fill="none" stroke="#797775"><path d="M0 10.5 H20.5 L30 1 L39.5 10.5 H225" /></svg>
    <div className="mt-[13px] grid grid-cols-[repeat(6,24px)] gap-[11px] pl-[14px]">
      {vizIcons.map((n, i) => (
        <div key={i} className={`h-6 w-6 ${i === 37 ? "outline outline-[1.5px] outline-offset-[3px] outline-[#252423]" : ""}`}>
          <svg className="h-6 w-6 overflow-visible" viewBox="0 0 72 72">{n}</svg>
        </div>
      ))}
    </div>
    <svg className="mt-[20px] ml-[16px] h-[3px] w-[19px] shrink-0" viewBox="0 0 19 3" fill="#252423"><rect x="0.5" y="0.3" width="2.2" height="2.2" /><rect x="8.3" y="0.3" width="2.2" height="2.2" /><rect x="15.8" y="0.3" width="2.2" height="2.2" /></svg>
    <div className="mt-[23px] border-t border-[#dcdad8]" />
    <div className="flex flex-col pl-[5px] text-[14.5px] tracking-[-0.1px]">
      <div className="mt-[10px] h-[22px] pl-[10px] leading-[22px]">Data</div>
      <div className="mt-[5px] h-[45px] w-[213px] border border-dashed border-[#c8c6c4] bg-white p-[3px] pt-[4px]">
        <div className="flex h-[28px] items-center rounded-[2px] border border-[#b3b0ad] bg-[#edebe9] pl-[5px]">
          Count of id
          <svg className="ml-auto h-[8px] w-[14px]" viewBox="0 0 14 8" fill="none" stroke="#3b3a39" strokeWidth="1.1"><path d="M0.5 0.5 L7 7 L13.5 0.5" /></svg>
          <svg className="mr-[5px] ml-[8px] h-[10px] w-[10px]" viewBox="0 0 10 10" fill="none" stroke="#3b3a39" strokeWidth="1.1"><path d="M0.5 0.5 L9.5 9.5 M9.5 0.5 L0.5 9.5" /></svg>
        </div>
      </div>
      <div className="mt-[12px] h-[22px] pl-[10px] leading-[22px]">Tooltips</div>
      <div className="mt-[6px] flex h-[35px] w-[213px] items-center border border-dashed border-[#c8c6c4] bg-white pb-[1px] pl-[12px]">Add data fields here</div>
      <div className="mt-[12px] h-[22px] pl-[10px] leading-[22px] font-semibold text-[#484644]">Drill through</div>
      <div className="mt-[10px] flex h-[22px] items-center justify-between pr-[27px] pl-[10px]">
        Cross-report
        <span className="flex h-[20px] w-[40px] items-center rounded-full border border-[#797775] bg-white pl-[5px] text-[12px] text-[#605e5c]"><span className="mr-[2px] h-[10px] w-[10px] rounded-full bg-[#605e5c]" />Off</span>
      </div>
      <div className="mt-[12px] flex h-[22px] items-center justify-between pr-[27px] pl-[10px]">
        <span className="-mt-[2px]">Keep all filters</span>
        <span className="flex h-[20px] w-[40px] items-center rounded-full bg-[#117865] pl-[5px] text-[12px] font-medium text-white">On<span className="ml-[4px] h-[10px] w-[10px] rounded-full bg-white" /></span>
      </div>
      <div className="mt-[12px] flex h-[32px] w-[213px] items-center whitespace-nowrap border border-dashed border-[#c8c6c4] bg-white pl-[10px]">Add drill-through fields here</div>
    </div>
  </aside>
);

/* ---------- data pane ---------- */

const TableIcon = ({ checked }: { checked?: boolean }) => (
  <span className="relative h-4 w-4">
    <svg className="h-4 w-4" viewBox="0 0 48 48" fill="none" stroke="#252423" strokeWidth="3.6"><rect x="2" y="2" width="44" height="44" rx="8" /><path d="M2 13 H46 M2 34 H46 M14 2 V46 M34 2 V46" /></svg>
    {checked && (
      <svg className="absolute left-[8px] top-[8px] h-[15px] w-[15px]" viewBox="0 0 15 15" fill="none"><circle cx="7.5" cy="7.5" r="7.5" fill="#117865" /><path d="M4.8 7.5 L6.8 9.5 L10.4 5.9" stroke="#fff" strokeWidth="1.7" /></svg>
    )}
  </span>
);

const FieldIcon = ({ kind }: { kind?: string }) => {
  if (kind === "date")
    return <svg className="h-4 w-4" viewBox="0 0 48 48" fill="none" stroke="#252423" strokeWidth="4"><rect x="2" y="2" width="44" height="44" rx="8" /><path d="M2 14 H46" /><path d="M11 25 H37 M11 34 H26" strokeDasharray="4 6" /></svg>;
  if (kind === "sum")
    return <svg className="h-4 w-4" viewBox="0 0 48 48" fill="none" stroke="#3b3a39" strokeWidth="3.6"><path d="M43 3 H5 L26 24 L5 45 H43" /></svg>;
  if (kind === "calc")
    return <svg className="h-[18px] w-[18px]" viewBox="0 0 54 54" fill="none" stroke="#3b3a39" strokeWidth="4"><path d="M44 16 V8 Q44 2 38 2 H10 Q2 2 2 10 V38 Q2 46 10 46 H20 M14 2 V46 M14 13 H44 M14 32 H24 M30 2 V18" /><path d="M51 24 H30 L41 37 L30 51 H53" strokeWidth="4.5" /></svg>;
  return null;
};

type Row = { n: string; table?: boolean; open?: boolean; exp?: boolean; kind?: string; on?: boolean };
const rows: Row[] = [
  { n: "apps", table: true, open: true, on: true },
  { n: "description" }, { n: "developer" }, { n: "id", on: true }, { n: "lastmod", exp: true, kind: "date" },
  { n: "pricing_hint" }, { n: "rating", kind: "sum" }, { n: "reviews_count", kind: "sum" }, { n: "tagline" },
  { n: "apps_categories", table: true }, { n: "categories", table: true }, { n: "reviews", table: true, open: true },
  { n: "app_id" }, { n: "author" }, { n: "body" }, { n: "developer_ans...", kind: "calc" }, { n: "developer_reply" },
  { n: "developer_reply...", exp: true, kind: "date" }, { n: "helpful_count", kind: "sum" }, { n: "helpful_reviews", kind: "calc" },
  { n: "posted_at" }, { n: "rating", kind: "sum" },
];

const ChevR = () => <svg className="h-[15px] w-[8px]" viewBox="0 0 8 15" fill="none" stroke="#605e5c" strokeWidth="1.2"><path d="M0.5 0.8 L7.2 7.5 L0.5 14.2" /></svg>;

const DataPane = () => (
  <aside className="flex w-[225px] shrink-0 flex-col text-[#3b3a39]">
    <div className="mt-[12px] flex h-[26px] items-center justify-between pr-[10px] pl-[10px]">
      <h2 className="text-[18.7px] font-semibold text-[#252423]">Data</h2>
      <Chev2 />
    </div>
    <div className="mt-[19px] ml-[5px] flex h-[30px] w-[215px] items-center rounded-[4px] border border-[#d1d1d1] border-b-[#616161] bg-white pl-[14px]">
      <svg className="h-[18px] w-[18px]" viewBox="0 0 18 18" fill="none" stroke="#616161" strokeWidth="1.2"><circle cx="7.5" cy="7.5" r="6.5" /><path d="M12.2 12.2 L17.3 17.3" /></svg>
      <span className="ml-[9px] pt-[2px] text-[16.7px] tracking-[-0.2px] text-[#707070]">Search</span>
    </div>
    <div className="mt-[12px] flex flex-col text-[14.4px] tracking-[-0.13px]">
      {rows.map((r, i) =>
        r.table ? (
          <div key={i} className="flex h-[30px] items-center">
            <span className="flex w-[36px] items-center pl-[17px]">
              {r.open ? <svg className="h-[8px] w-[14px]" viewBox="0 0 14 8" fill="none" stroke="#605e5c" strokeWidth="1.2"><path d="M0.5 0.5 L7 7 L13.5 0.5" /></svg> : <span className="pl-[3px]"><ChevR /></span>}
            </span>
            <TableIcon checked={r.on} />
            <span className="ml-[6px]">{r.n}</span>
          </div>
        ) : (
          <div key={i} className="flex h-[30px] items-center">
            <span className="w-[55px] pl-[38px]">{r.exp && <ChevR />}</span>
            {r.on ? (
              <svg className="h-[15px] w-[15px]" viewBox="0 0 15 15"><rect width="15" height="15" rx="2" fill="#117865" /><path d="M3 7.3 L6.2 10.3 L12.2 4.3" stroke="#fff" strokeWidth="1.2" fill="none" /></svg>
            ) : (
              <span className="h-[15px] w-[15px] rounded-[2px] border border-[#797775]" />
            )}
            <span className="flex w-[32px] pl-[10px]"><FieldIcon kind={r.kind} /></span>
            <span className="whitespace-nowrap">{r.n}</span>
          </div>
        )
      )}
    </div>
  </aside>
);

const Status = () => (
  <footer className="flex h-[29px] items-center border-t border-[#dcdad8] pl-[5px] text-[14.5px] text-[#3b3a39]">
    <span className="pt-[1px]">Page 1 of 3</span>
    <span className="mr-[6px] ml-auto h-[1.5px] w-[5px] bg-[#3b3a39]" />
    <span className="relative h-px w-[125px] bg-[#605e5c]"><span className="absolute -top-[6px] left-[62px] h-[13px] w-[5px] bg-[#605e5c]" /></span>
    <svg className="ml-[7px] h-[9px] w-[9px]" viewBox="0 0 9 9" stroke="#3b3a39" strokeWidth="1.6"><path d="M4.5 0 V9 M0 4.5 H9" /></svg>
    <span className="ml-[17px] w-[36px] text-[14.3px] tracking-[-0.1px] text-[#605e5c]">110%</span>
    <svg className="mr-[22px] ml-[15px] h-[16px] w-[21px]" viewBox="0 0 21 16" fill="none" stroke="#605e5c" strokeWidth="1.4"><path d="M1 1 H20 V15 H1 Z M3.8 6 V3.8 H6.5 M14.5 3.8 H17.2 V6 M17.2 10 V12.2 H14.5 M6.5 12.2 H3.8 V10" /></svg>
  </footer>
);

export default function App() {
  return (
    <div className="flex h-[1003px] w-[1920px] flex-col overflow-hidden bg-[#f3f2f1] font-['Open_Sans',sans-serif] text-[14px]">
      <Ribbon />
      <main className="flex h-[812px]">
        <Rail />
        <div className="flex w-[1374px] shrink-0 flex-col">
          <Banner />
          <div className="flex"><ReportCanvas /><Filters /></div>
          <PageTabs />
        </div>
        <div className="flex w-[44px] shrink-0 flex-col items-center border-x border-[#dcdad8]">
          <div className="mt-[17px]"><Chev2 left /></div>
          <span className="mt-[17px] text-[18.6px] font-semibold whitespace-nowrap text-[#252423] [writing-mode:vertical-rl]">Quick measure</span>
        </div>
        <Visualizations />
        <DataPane />
      </main>
      <Status />
    </div>
  );
}
